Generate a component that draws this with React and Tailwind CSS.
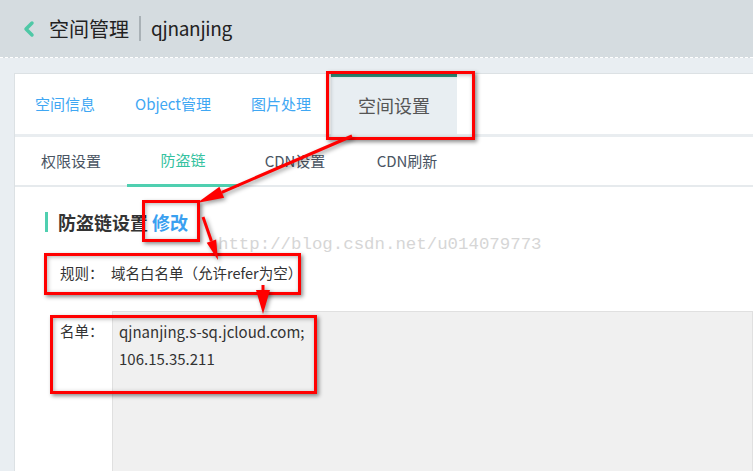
import { ChevronLeft } from 'lucide-react';

const FONT = { fontFamily: '"Noto Sans CJK SC", "Noto Sans", sans-serif' };

// --- annotation helpers ---
const Arrow = ({ from, to, head = 26, half = 6 }) => {
  const dx = to[0] - from[0];
  const dy = to[1] - from[1];
  const len = Math.hypot(dx, dy);
  const ux = dx / len;
  const uy = dy / len;
  const bx = to[0] - ux * head;
  const by = to[1] - uy * head;
  const nx = -uy * half;
  const ny = ux * half;
  return (
    <g>
      <line x1={from[0]} y1={from[1]} x2={bx} y2={by} stroke="#ff0000" strokeWidth="3" />
      <polygon
        points={`${to[0]},${to[1]} ${bx + nx},${by + ny} ${bx - nx},${by - ny}`}
        fill="#ff0000"
      />
    </g>
  );
};

const RedBox = ({ className }) => (
  <div
    className={`absolute border-[3px] border-[#ff0000] shadow-[2px_2px_4px_rgba(0,0,0,0.45),inset_1px_1px_4px_rgba(0,0,0,0.3)] pointer-events-none ${className}`}
  />
);

const topTabs = ['空间信息', 'Object管理', '图片处理'];
const subTabs = ['权限设置', '防盗链', 'CDN设置', 'CDN刷新'];

export default function App() {
  return (
    <div className="relative w-[753px] h-[471px] overflow-hidden bg-[#e9eef2]" style={FONT}>
      {/* Header */}
      <div className="h-[58px] bg-[#d5dce0] border-b border-dashed border-white flex items-center pl-[17px]">
        <ChevronLeft className="w-[24px] h-[24px] text-[#4fc8a6]" strokeWidth={3.5} />
        <span className="ml-[8px] text-[20px] text-[#222]">空间管理</span>
        <span className="mx-[10px] w-[2px] h-[25px] bg-[#a9b1b6]" />
        <span className="text-[19px] tracking-[-0.3px] text-[#222]">qjnanjing</span>
      </div>

      {/* Card */}
      <div className="mt-[15px] ml-[14px] h-full bg-white border-l border-t border-[#dce1e4]">
        {/* Top tabs */}
        <div className="h-[60px] flex items-stretch">
          {topTabs.map((t) => (
            <div key={t} className="px-[20px] flex items-center text-[15px] text-[#3fa7f3]">
              {t}
            </div>
          ))}
          <div className="px-[27px] flex items-center text-[18px] text-[#555] bg-[#e8eef2] border-t-[3px] border-[#2f8f78]">
            空间设置
          </div>
        </div>
        <div className="h-[3px] bg-[#e9edf0]" />

        {/* Sub tabs */}
        <div className="h-[50px] flex items-stretch border-b-2 border-[#e6eaed]">
          {subTabs.map((t, i) => (
            <div
              key={t}
              className={`w-[112px] flex items-center justify-center text-[15px] ${
                i === 1
                  ? 'text-[#35c2a0] border-b-[3px] border-[#4fcfb0] -mb-[2px]'
                  : 'text-[#4a5563]'
              }`}
            >
              {t}
            </div>
          ))}
        </div>

        {/* Content */}
        <div className="pl-[30px] pt-[24px]">
          <div className="flex items-center h-[22px]">
            <span className="w-[3px] h-[20px] bg-[#4fcfb0]" />
            <span className="ml-[10px] text-[18px] font-bold text-[#333]">防盗链设置</span>
            <span className="ml-[4px] text-[18px] font-bold text-[#3aa0f0]">修改</span>
          </div>

          <div className="mt-[29px] pl-[15px] flex items-center text-[14.5px] text-[#333]">
            <span className="w-[51px]">规则：</span>
            <span>域名白名单（允许refer为空）</span>
          </div>

          <div className="mt-[27px] pl-[15px] flex">
            <span className="w-[52px] pt-[9px] text-[14.5px] text-[#333]">名单：</span>
            <div className="flex-1 h-[170px] bg-[#f0f0f0] border border-[#e0e0e0] pl-[6px] pt-[6px] text-[15px] leading-[27px] text-[#333]">
              <div>qjnanjing.s-sq.jcloud.com;</div>
              <div>106.15.35.211</div>
            </div>
          </div>
        </div>
      </div>

      {/* Watermark */}
      <div
        className="absolute left-[218px] top-[232px] text-[17.4px] text-[#d6d6d6] pointer-events-none"
        style={{ fontFamily: '"Liberation Mono", monospace' }}
      >
        http://blog.csdn.net/u014079773
      </div>

      {/* Annotations */}
      <RedBox className="left-[326px] top-[71px] w-[149px] h-[69px]" />
      <RedBox className="left-[142px] top-[200px] w-[58px] h-[42px]" />
      <RedBox className="left-[44px] top-[253px] w-[257px] h-[42px]" />
      <RedBox className="left-[50px] top-[315px] w-[267px] h-[79px]" />
      <svg
        className="absolute inset-0 pointer-events-none drop-shadow-[2px_2px_2px_rgba(0,0,0,0.4)]"
        width="753"
        height="471"
      >
        <Arrow from={[352, 136]} to={[197, 203]} head={27} half={6} />
        <Arrow from={[203, 217]} to={[218, 260]} head={20} half={5} />
        <Arrow from={[263, 285]} to={[263, 314]} head={24} half={7} />
      </svg>
    </div>
  );
}
